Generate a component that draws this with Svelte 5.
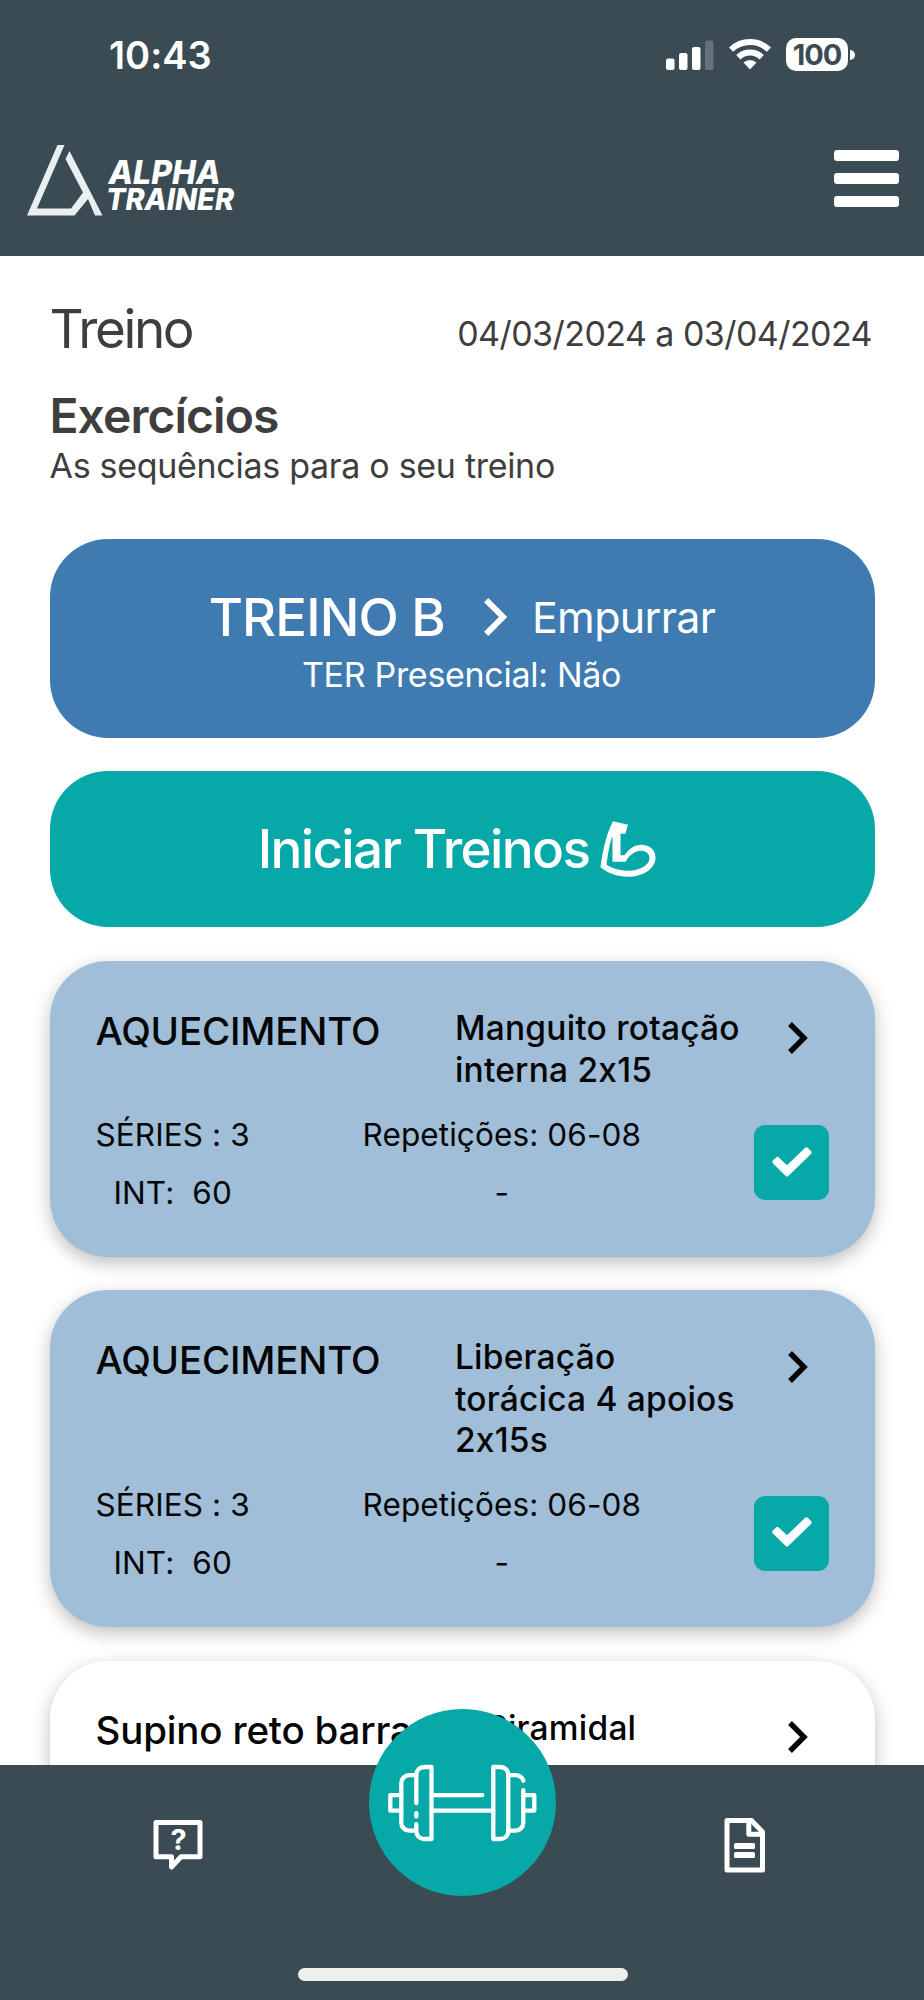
<script lang="ts">
  interface Exercise {
    group: string;
    name: string;
    series: number;
    reps: string;
    interval: number;
    done: boolean;
  }

  let exercises: Exercise[] = $state([
    { group: 'AQUECIMENTO', name: 'Manguito rotação interna 2x15', series: 3, reps: '06-08', interval: 60, done: true },
    { group: 'AQUECIMENTO', name: 'Liberação torácica 4 apoios 2x15s', series: 3, reps: '06-08', interval: 60, done: true },
    { group: 'Supino reto barra', name: 'Piramidal', series: 3, reps: '06-08', interval: 60, done: false },
  ]);

  const signal = [11.5, 17, 23, 29.5];
</script>

<div class="screen">
  <header>
    <div class="status">
      <span class="time">10:43</span>
      <div class="indicators">
        <svg class="signal" width="48" height="30" viewBox="0 0 48 30">
          {#each signal as h, i}
            <rect x={i * 13} y={30 - h} width="8.5" height={h} rx="2" fill="#fff" opacity={i === 3 ? 0.22 : 1} />
          {/each}
        </svg>
        <svg class="wifi" width="42" height="31" viewBox="0 0 42 31">
          <g fill="none" stroke="#fff" stroke-width="6">
            <path d="M2.1 10.6A27.5 27.5 0 0 1 39.9 10.6" />
            <path d="M9.3 18.2A17 17 0 0 1 32.7 18.2" />
          </g>
          <path d="M21 30.5L14.5 23.6A9.5 9.5 0 0 1 27.5 23.6Z" fill="#fff" />
        </svg>
        <div class="battery">100</div>
        <svg width="4" height="10" viewBox="0 0 4 10"><path d="M0 0A5 5 0 0 1 0 10Z" fill="#fff" /></svg>
      </div>
    </div>
    <div class="navbar">
      <svg class="logo" width="210" height="72" viewBox="26 145 210 72">
        <path
          d="M57.5 145H64.5L37 208.5H71L83 192.5L65.5 159L69.5 151L102.5 215.5H95L88 199L74.5 215.5H27Z"
          fill="#e9eef0"
        />
        <text x="108.5" y="183.5" font-size="32.5" textLength="112" lengthAdjust="spacingAndGlyphs">ALPHA</text>
        <text x="106" y="209.7" font-size="30" textLength="128" lengthAdjust="spacingAndGlyphs">TRAINER</text>
      </svg>
      <button class="menu" aria-label="Menu">
        <span></span>
        <span></span>
        <span></span>
      </button>
    </div>
  </header>

  <main>
    <div class="heading">
      <h1>Treino</h1>
      <span class="period">04/03/2024 a 03/04/2024</span>
    </div>
    <h2>Exercícios</h2>
    <p class="subtitle">As sequências para o seu treino</p>

    <section class="workout">
      <div class="workout-title">
        <strong>TREINO B</strong>
        <svg width="23" height="38" viewBox="0 0 23 38">
          <path d="M2.2 2.2L19 19L2.2 35.8" fill="none" stroke="#fff" stroke-width="6" />
        </svg>
        <span>Empurrar</span>
      </div>
      <p>TER Presencial: Não</p>
    </section>

    <button class="start">
      <span>Iniciar Treinos</span>
      <svg width="56" height="56" viewBox="10 11.2 56 56">
        <path
          fill="#fff"
          fill-rule="evenodd"
          d="M23 11.5L38 15L35.3 24H30.5V45.5H34.5C39 39 45 35 51 35C59.5 35 65.5 40 65.5 48C65.5 59 53 67 38 67C27 67 17 63 10.5 57.5C13 40 16 25 23 11.5ZM22.5 28V52H35.5C39.5 45 45 41 51 41C56 41 59.5 44 59.5 48.5C59.5 55 50 61 38 61C30 61 22 58.5 16.5 55C17.5 46 19 37 22 27Z"
        />
      </svg>
    </button>

    {#each exercises as ex}
      <article class="card" class:done={ex.done}>
        <div class="card-head">
          <h3>{ex.group}</h3>
          <span class="name">{ex.name}</span>
          <svg class="chevron" width="20" height="32" viewBox="0 0 20 32">
            <path d="M2 2L16 16L2 30" fill="none" stroke="#050505" stroke-width="5.4" />
          </svg>
        </div>
        <div class="card-body">
          <div class="col">
            <span>SÉRIES : {ex.series}</span>
            <span>INT:&nbsp; {ex.interval}</span>
          </div>
          <div class="col">
            <span>Repetições: {ex.reps}</span>
            <span>-</span>
          </div>
          <button class="check" aria-label="Concluir" onclick={() => (ex.done = !ex.done)}>
            <svg width="40" height="30" viewBox="0 0 40 30">
              <path
                d="M0.8 13.6L4.2 10.400Q5.500 9.200 6.800 10.400L15 18.200L33.200 0.800Q34.500 -0.300 35.800 0.800L39.200 4.200Q40.300 5.500 39.200 6.800L16.300 29Q15 30.100 13.700 29L0.800 16.200Q-0.300 14.900 0.800 13.600Z"
                fill="#fff"
              />
            </svg>
          </button>
        </div>
      </article>
    {/each}
  </main>

  <footer>
    <svg class="help" width="50" height="52" viewBox="33 79 50 52">
      <path d="M36 82.5H80V116.8H61L51.5 127V116.8H36Z" fill="none" stroke="#fff" stroke-width="5" stroke-linejoin="round" />
      <text x="58.7" y="109.7" font-size="29" text-anchor="middle">?</text>
    </svg>
    <svg class="doc" width="42" height="56" viewBox="24 77.5 42 56">
      <g fill="none" stroke="#fff" stroke-width="5" stroke-linejoin="round">
        <path d="M27 80H51.5L62.5 91.5V129.5H27Z" />
        <path d="M48.8 80V93.8H62.5" />
      </g>
      <rect x="34" y="102.5" width="21" height="6" rx="1.5" fill="#fff" />
      <rect x="34" y="111.5" width="21" height="6" rx="1.5" fill="#fff" />
    </svg>
    <button class="fab" aria-label="Treinos">
      <svg width="150" height="78" viewBox="47.7 124.3 150 78">
        <g fill="none" stroke="#fff" stroke-width="4.3" stroke-linecap="round" stroke-linejoin="round">
          <path d="M76 163.5V135A7.7 7.7 0 0 1 83.7 127.3H91.2V199.3H83.7A7.7 7.7 0 0 1 76 191.6V184.5" />
          <path d="M76 173.5V176.8" />
          <path d="M76 135.5H69A8 8 0 0 0 61 143.5V183A8 8 0 0 0 69 191H76" />
          <path d="M61 155.5H50V171H61" />
          <path d="M91.2 155.5H142M91.2 171H153" />
          <path d="M153 127.3H160.3A7.7 7.7 0 0 1 168 135V191.6A7.7 7.7 0 0 1 160.3 199.3H153Z" />
          <path d="M168 135.5H175A8 8 0 0 1 183 141" />
          <path d="M183 150.5V183A8 8 0 0 1 175 191H168" />
          <path d="M183 155.5H194V171H183" />
        </g>
      </svg>
    </button>
    <div class="home-bar"></div>
  </footer>
</div>

<style>
  :global(body) {
    margin: 0;
    background: #fff;
  }

  .screen {
    width: 924px;
    height: 2000px;
    display: flex;
    flex-direction: column;
    overflow: hidden;
    font-family: Inter, 'Liberation Sans', sans-serif;
    /* keeps the "x" in "2x15" a plain letter */
    font-feature-settings: 'calt' 0;
    color: #3e3e3e;
  }

  h1,
  h2,
  h3,
  p {
    margin: 0;
    font-weight: 400;
  }

  button {
    border: none;
    padding: 0;
    font: inherit;
    cursor: pointer;
  }

  svg {
    display: block;
    flex: none;
    overflow: visible;
  }

  header {
    flex: none;
    height: 256px;
    box-sizing: border-box;
    background: #3b4b53;
    color: #fff;
  }

  .status {
    display: flex;
    justify-content: space-between;
    height: 111px;
    padding: 0 70px 0 109px;
  }

  .time {
    font-size: 38px;
    font-weight: 600;
    line-height: 111px;
  }

  .indicators {
    display: flex;
    align-items: center;
    height: 109px;
  }

  .wifi {
    margin-left: 15px;
  }

  .battery {
    width: 62px;
    height: 33px;
    margin: 0 2px 0 15.5px;
    border-radius: 10px;
    background: #fff;
    color: #3b4b53;
    font-size: 29px;
    font-weight: 700;
    line-height: 33px;
    letter-spacing: -1px;
    text-align: center;
  }

  .navbar {
    display: flex;
    justify-content: space-between;
    padding: 34px 25px 0 26px;
  }

  .logo text {
    font-family: Inter, sans-serif;
    font-weight: 800;
    font-style: italic;
    fill: #fff;
  }

  .menu {
    display: flex;
    flex-direction: column;
    gap: 12px;
    padding-top: 5px;
    background: none;
  }

  .menu span {
    width: 65.5px;
    height: 11px;
    border-radius: 3px;
    background: #fff;
  }

  main {
    flex: 1;
    min-height: 0;
    overflow: hidden;
    padding: 41px 49.5px 0;
  }

  .heading {
    display: flex;
    justify-content: space-between;
  }

  h1 {
    font-size: 53px;
    line-height: 64px;
    letter-spacing: -2.4px;
  }

  .period {
    padding: 10px 2.5px 0 0;
    font-size: 34px;
    line-height: 54px;
    letter-spacing: -0.56px;
  }

  h2 {
    margin-top: 27px;
    font-size: 48px;
    font-weight: 600;
    line-height: 56px;
    letter-spacing: -0.95px;
  }

  .subtitle {
    font-size: 34px;
    line-height: 43px;
    letter-spacing: -0.3px;
  }

  .workout {
    height: 199px;
    box-sizing: border-box;
    margin-top: 52px;
    padding-top: 46px;
    border-radius: 58px;
    background: #3f7bb1;
    color: #fff;
    text-align: center;
  }

  .workout-title {
    display: flex;
    justify-content: center;
    align-items: center;
    height: 64px;
    white-space: nowrap;
  }

  .workout-title strong {
    margin-right: 39px;
    font-size: 52.5px;
    font-weight: 500;
    letter-spacing: -0.8px;
  }

  .workout-title span {
    margin-left: 25px;
    font-size: 43px;
    letter-spacing: -0.65px;
  }

  .workout p {
    padding: 1px 1px 0 0;
    font-size: 34px;
    line-height: 50px;
    letter-spacing: -0.3px;
  }

  .start {
    display: flex;
    justify-content: center;
    align-items: center;
    gap: 11px;
    width: 100%;
    height: 156px;
    margin: 33px 0 34px;
    padding-right: 10px;
    border-radius: 58px;
    background: #06a8a8;
    color: #fff;
    font-size: 53px;
    font-weight: 500;
    letter-spacing: -1.65px;
  }

  .card {
    margin-bottom: 33.5px;
    padding: 46.5px 45.5px 35px 46px;
    border-radius: 58px;
    background: #fff;
    box-shadow: 0 6px 18px rgba(0, 0, 0, 0.26);
    color: #050505;
  }

  .card.done {
    background: #a0bed8;
  }

  .card-head {
    display: flex;
  }

  h3 {
    margin-right: 74.5px;
    font-size: 38.5px;
    font-weight: 500;
    line-height: 46px;
    letter-spacing: -0.18px;
    white-space: nowrap;
  }

  .name {
    max-width: 292px;
    padding-top: 0.5px;
    font-size: 33.5px;
    font-weight: 500;
    line-height: 41.5px;
    letter-spacing: 0.22px;
  }

  .chevron {
    margin: 14px 21.5px 0 auto;
  }

  .card-body {
    display: grid;
    grid-template-columns: 267px 1fr 75px;
    align-items: center;
    margin-top: 14.5px;
  }

  .col {
    display: flex;
    flex-direction: column;
    align-items: center;
    width: max-content;
    font-size: 31.5px;
    line-height: 58px;
    letter-spacing: 0.1px;
  }

  .check {
    display: flex;
    justify-content: center;
    align-items: center;
    height: 75px;
    margin-bottom: 2px;
    padding-bottom: 2px;
    box-sizing: border-box;
    border-radius: 11px;
    background: #06a8a8;
  }

  footer {
    position: relative;
    flex: none;
    display: flex;
    justify-content: space-between;
    height: 235.5px;
    box-sizing: border-box;
    padding: 53px 158px 0 153px;
    background: #3b4b53;
  }

  .help {
    margin-top: 1.5px;
  }

  .help text {
    font-weight: 700;
    fill: #fff;
  }

  /* Floating button that overlaps the top edge of the footer */
  .fab {
    position: absolute;
    top: -55.5px;
    left: 50%;
    width: 187px;
    height: 187px;
    margin-left: -93px;
    display: flex;
    justify-content: center;
    align-items: center;
    border-radius: 50%;
    background: #06a8a8;
  }

  .home-bar {
    position: absolute;
    bottom: 19.5px;
    left: 50%;
    width: 330px;
    height: 13px;
    margin-left: -164.5px;
    border-radius: 7px;
    background: #efefef;
  }
</style>
